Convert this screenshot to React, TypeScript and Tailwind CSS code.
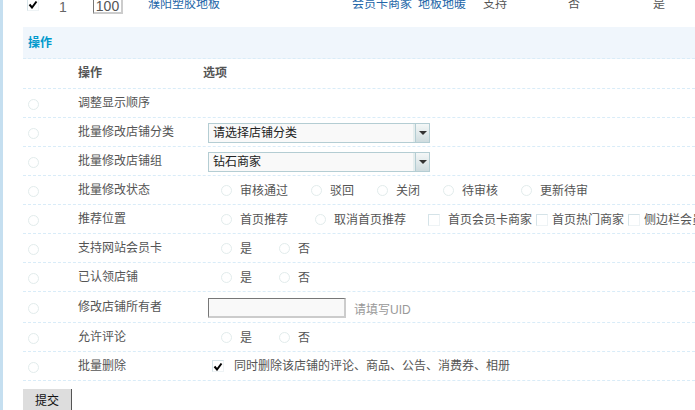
function Radio() {
  return <span className="inline-block w-[11px] h-[11px] rounded-full border border-[#e2ecec] bg-white shrink-0" />;
}
function Check({ checked = false }: { checked?: boolean }) {
  return (
    <span className="inline-flex items-center justify-center w-[12px] h-[12px] border border-l-[#d5e3e8] border-t-[#d5e3e8] border-r-[#eef3f5] border-b-[#eef3f5] bg-white shrink-0">
      {checked && (
        <svg width="10" height="9" viewBox="0 0 10 9">
          <path d="M1.5 4.5 L4 7.5 L8.5 1.5" fill="none" stroke="#000" strokeWidth="2" />
        </svg>
      )}
    </span>
  );
}
function Opt({ label, className = "" }: { label: string; className?: string }) {
  return (
    <span className={`flex items-center gap-2 ${className}`}>
      <Radio />
      <span>{label}</span>
    </span>
  );
}
function CheckOpt({ label, gap }: { label: string; gap: string }) {
  return (
    <span className={`flex items-center ${gap}`}>
      <Check />
      <span className="whitespace-nowrap">{label}</span>
    </span>
  );
}
function Select({ value }: { value: string }) {
  return (
    <div className="flex w-[222px] h-[20px] mt-[2px] border border-[#b4cdd3] bg-[#f9f9f9] text-[#222]">
      <span className="flex-1 pl-1 leading-[19px] border-r-2 border-[#e6eeee]">{value}</span>
      <span className="w-[14px] flex items-center justify-center bg-gradient-to-b from-[#f4f7f7] to-[#cfdcdf] border-l border-[#b4cdd3]">
        <span className="w-0 h-0 border-l-[4px] border-r-[4px] border-t-[4px] border-l-transparent border-r-transparent border-t-[#333]" />
      </span>
    </div>
  );
}
function Row({ label, h, children }: { label: string; h: string; children?: React.ReactNode }) {
  return (
    <div className={`flex items-center border-b border-dashed border-[#d9ecf8] ${h}`}>
      <span className="w-[55px] pl-[5px] pt-[2px] flex items-center"><Radio /></span>
      <span className="w-[130px] pb-[1px]">{label}</span>
      <div className="flex items-center flex-1 min-w-0 whitespace-nowrap">{children}</div>
    </div>
  );
}
function YesNo() {
  return (
    <div className="flex items-center gap-[27px] pl-[13px] pt-[1px]">
      <Opt label="是" />
      <Opt label="否" />
    </div>
  );
}
export default function App() {
  return (
    <div
      className="w-[695px] h-[410px] overflow-hidden bg-white border-l-[3px] border-[#c5dff0] text-[12px] text-[#555] leading-[16px]"
      style={{ fontFamily: '"Liberation Sans", "Noto Sans CJK SC", sans-serif' }}
    >
      <div className="pl-[20px] whitespace-nowrap">
        <div className="flex items-start h-[27px] overflow-hidden">
          <span className="w-[36px] pl-[4px] mt-[-3px]"><Check checked /></span>
          <span className="w-[34px] text-[14px] leading-[14px] text-[#666]">1</span>
          <span className="w-[30px] h-[15px] mr-[25px] border-l border-t border-r-2 border-b-2 border-l-[#777] border-t-[#777] border-r-[#ccc] border-b-[#ccc] text-[14px] leading-[13px] text-center mt-[-1px] overflow-hidden">100</span>
          <span className="flex text-[#2366a8] mt-[-4px]">
            <span className="w-[204px]">濮阳塑胶地板</span>
            <span className="w-[66px]">会员卡商家</span>
            <span className="w-[65px]">地板地暖</span>
          </span>
          <span className="w-[85px] mt-[-4px]">支持</span>
          <span className="w-[85px] mt-[-4px]">否</span>
          <span className="mt-[-4px]">是</span>
        </div>
        <div className="h-[32px] bg-[#f0f6fc] border-b border-dashed border-[#d9ecf8] pl-[5px] flex items-center font-bold text-[#0099cc]">操作</div>
        <div className="flex items-center h-[30px] border-b border-dashed border-[#d9ecf8] font-bold pb-[2px]">
          <span className="w-[55px]" />
          <span className="w-[125px]">操作</span>
          <span>选项</span>
        </div>
        <Row label="调整显示顺序" h="h-[29px]" />
        <Row label="批量修改店铺分类" h="h-[29px]"><Select value="请选择店铺分类" /></Row>
        <Row label="批量修改店铺组" h="h-[29px]"><Select value="钻石商家" /></Row>
        <Row label="批量修改状态" h="h-[29px]">
          <div className="flex items-center gap-[23px] pl-[13px] pt-[1px]">
            <Opt label="审核通过" />
            <Opt label="驳回" />
            <Opt label="关闭" />
            <Opt label="待审核" />
            <Opt label="更新待审" />
          </div>
        </Row>
        <Row label="推荐位置" h="h-[29px]">
          <div className="flex items-center pl-[13px] pt-[1px]">
            <Opt label="首页推荐" className="mr-[27px]" />
            <Opt label="取消首页推荐" className="mr-[22px]" />
            <span className="mr-[4px]"><CheckOpt label="首页会员卡商家" gap="gap-2" /></span>
            <span className="mr-[4px]"><CheckOpt label="首页热门商家" gap="gap-1" /></span>
            <CheckOpt label="侧边栏会员卡商家" gap="gap-1" />
          </div>
        </Row>
        <Row label="支持网站会员卡" h="h-[29px]"><YesNo /></Row>
        <Row label="已认领店铺" h="h-[29px]"><YesNo /></Row>
        <Row label="修改店铺所有者" h="h-[31px]">
          <span className="w-[138px] h-[20px] mt-[2px] bg-[#f9f9f9] border-l border-t border-r-2 border-b-2 border-l-[#777] border-t-[#777] border-r-[#ccc] border-b-[#ccc]" />
          <span className="ml-2 mt-[5px] text-[#999]">请填写UID</span>
        </Row>
        <Row label="允许评论" h="h-[29px]"><YesNo /></Row>
        <Row label="批量删除" h="h-[29px]">
          <span className="flex items-center gap-[10px] pl-[4px]">
            <Check checked />
            <span>同时删除该店铺的评论、商品、公告、消费券、相册</span>
          </span>
        </Row>
        <button className="mt-[8px] w-[49px] h-[24px] bg-[#dddddd] border-r border-[#555] text-[#111] pb-[1px]">提交</button>
      </div>
    </div>
  );
}
